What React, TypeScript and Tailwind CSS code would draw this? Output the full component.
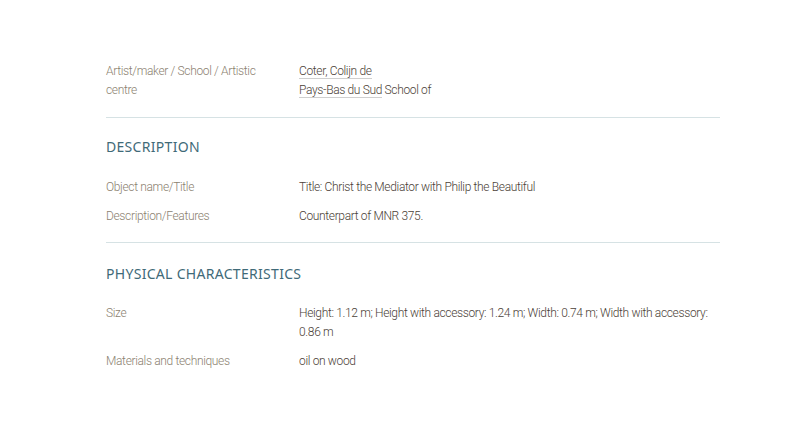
export default function App() {
  const rows1 = [
    { label: 'Object name/Title', value: <>Title: Christ the Mediator with Philip the Beautiful</> },
    { label: 'Description/Features', value: <>Counterpart of MNR 375.</> },
  ];
  const rows2 = [
    { label: 'Size', value: <>Height: 1.12 m; Height with accessory: 1.24 m; Width: 0.74 m; Width with accessory: 0.86 m</> },
    { label: 'Materials and techniques', value: <>oil on wood</> },
  ];

  const Row = ({ label, value }: { label: string; value: React.ReactNode }) => (
    <div className="grid grid-cols-[193px_1fr]">
      <div className="text-[#8b7f70] pr-4">{label}</div>
      <div className="text-[#4b4137]">{value}</div>
    </div>
  );

  return (
    <div className="w-[800px] h-[434px] bg-white font-['Roboto',sans-serif] font-light text-[12px] leading-[19px] tracking-[-0.35px]">
      <div className="ml-[106px] w-[614px] pt-[62px]">
        {/* Artist */}
        <div className="pb-[17px] border-b border-[#d6e2e4]">
          <div className="grid grid-cols-[193px_1fr]">
            <div className="text-[#8b7f70] pr-10">Artist/maker / School / Artistic centre</div>
            <div className="text-[#4b4137]">
              <div>
                <span className="border-b border-[#cfcfcf]">Coter, Colijn de</span>
              </div>
              <div>
                <span className="border-b border-[#cfcfcf]">Pays-Bas du Sud</span> School of
              </div>
            </div>
          </div>
        </div>

        {/* Description */}
        <div className="pt-[19px] pb-[16px] border-b border-[#d6e2e4]">
          <h2 className="font-['Noto_Sans',sans-serif] font-normal text-[14px] leading-[20px] text-[#3f6a78] tracking-[0.3px] mb-[21px]">
            DESCRIPTION
          </h2>
          <div className="flex flex-col gap-[10px]">
            {rows1.map((r) => (
              <Row key={r.label} label={r.label} value={r.value} />
            ))}
          </div>
        </div>

        {/* Physical characteristics */}
        <div className="pt-[21px]">
          <h2 className="font-['Noto_Sans',sans-serif] font-normal text-[14px] leading-[20px] text-[#3f6a78] tracking-[0.3px] mb-[20px]">
            PHYSICAL CHARACTERISTICS
          </h2>
          <div className="flex flex-col gap-[10px]">
            {rows2.map((r) => (
              <Row key={r.label} label={r.label} value={r.value} />
            ))}
          </div>
        </div>
      </div>
    </div>
  );
}
